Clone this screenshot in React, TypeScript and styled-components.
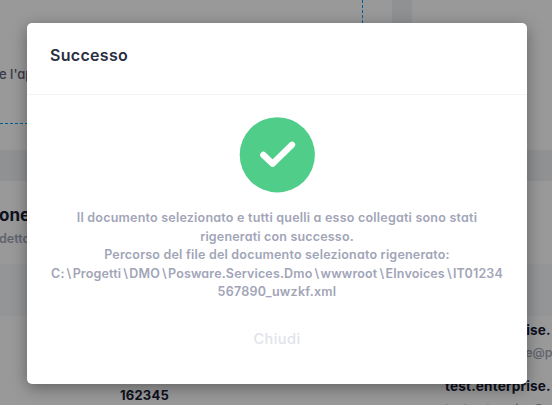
import React from "react";
import styled, { createGlobalStyle } from "styled-components";

const GlobalStyle = createGlobalStyle`
  *, *::before, *::after { box-sizing: border-box; }
  body {
    margin: 0;
    overflow: hidden;
    font-family: Inter, "Liberation Sans", sans-serif;
    font-feature-settings: "cv11" 1;
  }
`;

const Screen = styled.div`
  position: relative;
  width: 552px;
  height: 405px;
  overflow: hidden;
`;

const Page = styled.div`
  display: flex;
  flex-direction: column;
  gap: 31px;
  height: 100%;
  background: #eff2f5;
  white-space: nowrap;
`;

const TopCards = styled.div`
  display: grid;
  grid-template-columns: 392px 140px;
  column-gap: 20px;
  height: 150px;
  flex: none;
`;

const Card = styled.section`
  background: #fff;
  overflow: hidden;
`;

const Notice = styled.div`
  width: 363px;
  height: 124px;
  padding: 65px 0 0;
  border-right: 1px dashed #009ef7;
  border-bottom: 1px dashed #009ef7;
  color: #5e6278;
  font-size: 13px;
  font-weight: 500;
  line-height: 19px;
  text-indent: -1px;
`;

const OrdersCard = styled(Card)`
  flex: 1;
  display: flex;
  flex-direction: column;
`;

const OrdersHeading = styled.header`
  height: 83px;
  padding-top: 23px;
  flex: none;
`;

const OrdersTitle = styled.h2`
  margin: 0 0 0 -1px;
  color: #181c32;
  font-size: 17px;
  font-weight: 700;
  line-height: 22px;
`;

const OrdersSubtitle = styled.p`
  margin: 4px 0 0 -1px;
  color: #a1a5b7;
  font-size: 12.5px;
  font-weight: 600;
  line-height: 18px;
`;

const TableHead = styled.div`
  height: 52px;
  flex: none;
  background: #f7f8fa;
`;

const TableRow = styled.div`
  display: grid;
  grid-template-columns: 120px 325px 1fr;
  height: 56px;
  flex: none;
  padding-top: 5px;
`;

const CustomerCell = styled.div`
  grid-column: 3;
`;

const Strong = styled.div<{ $spacing?: number }>`
  color: #181c32;
  font-size: 13px;
  font-weight: 700;
  line-height: 18px;
  letter-spacing: ${({ $spacing = 0 }) => $spacing}px;
`;

const CustomerName = styled(Strong)`
  font-size: 13.6px;
`;

const OrderNumber = styled(Strong)`
  grid-column: 2;
  padding-top: 9px;
`;

const Email = styled.div`
  margin-top: 4px;
  color: #a1a5b7;
  font-size: 12.5px;
  font-weight: 500;
  line-height: 19px;
`;

const Overlay = styled.div`
  position: absolute;
  inset: 0;
  display: flex;
  align-items: flex-start;
  justify-content: center;
  padding: 23px 25px 0 27px;
  background: rgba(0, 0, 0, 0.4);
`;

const Dialog = styled.div`
  width: 500px;
  height: 361px;
  background: #fff;
  border-radius: 5px;
  box-shadow: 0 4px 16px rgba(0, 0, 0, 0.36);
`;

const DialogHeader = styled.header`
  height: 72px;
  padding: 22px 23px 0;
  border-bottom: 1px solid #f3f4f6;
`;

const DialogTitle = styled.h1`
  margin: 0;
  color: #2b2f42;
  font-size: 16px;
  font-weight: 600;
  line-height: 21px;
  letter-spacing: 0.3px;
`;

const DialogBody = styled.div`
  display: flex;
  flex-direction: column;
  align-items: center;
  padding-top: 22px;
`;

const SuccessIcon = styled.svg`
  display: block;
  width: 76px;
  height: 76px;
`;

const Message = styled.div`
  margin-top: 16px;
  color: #a1a5b7;
  font-size: 12.5px;
  font-weight: 600;
  line-height: 18.6px;
  text-align: center;
  white-space: nowrap;
`;

const Line = styled.div<{ $spacing: number }>`
  letter-spacing: ${({ $spacing }) => $spacing}px;
`;

const Separator = styled.span`
  padding: 0 1.2px 0 2px;
`;

const CloseButton = styled.button`
  margin-top: 26px;
  padding: 0;
  border: 0;
  background: none;
  color: #e1e3ea;
  font: 500 14.5px/22px Inter, "Liberation Sans", sans-serif;
  letter-spacing: 0.45px;
`;

const messageLines = [
  { text: "Il documento selezionato e tutti quelli a esso collegati sono stati", spacing: 0.22 },
  { text: "rigenerati con successo.", spacing: 0.18 },
  { text: "Percorso del file del documento selezionato rigenerato:", spacing: 0.2 },
  { text: "C:\\Progetti\\DMO\\Posware.Services.Dmo\\wwwroot\\EInvoices\\IT01234", spacing: 0.155 },
  { text: "567890_uwzkf.xml", spacing: 0.27 },
];

function PathText({ text }: { text: string }) {
  return (
    <>
      {text.split("\\").map((part, index) => (
        <React.Fragment key={part}>
          {index > 0 && <Separator>{"\\"}</Separator>}
          {part}
        </React.Fragment>
      ))}
    </>
  );
}

export default function App() {
  return (
    <Screen>
      <GlobalStyle />
      <Page>
        <TopCards>
          <Card>
            <Notice>e l'app</Notice>
          </Card>
          <Card />
        </TopCards>
        <OrdersCard>
          <OrdersHeading>
            <OrdersTitle>one</OrdersTitle>
            <OrdersSubtitle>detto</OrdersSubtitle>
          </OrdersHeading>
          <TableHead />
          <TableRow>
            <CustomerCell>
              <CustomerName $spacing={0.15}>test.enterprise.</CustomerName>
              <Email>test.enterprise@p</Email>
            </CustomerCell>
          </TableRow>
          <TableRow>
            <OrderNumber $spacing={0.2}>162345</OrderNumber>
            <CustomerCell>
              <CustomerName $spacing={0.15}>test.enterprise.</CustomerName>
              <Email>test.enterprise@p</Email>
            </CustomerCell>
          </TableRow>
        </OrdersCard>
      </Page>
      <Overlay>
        <Dialog role="dialog">
          <DialogHeader>
            <DialogTitle>Successo</DialogTitle>
          </DialogHeader>
          <DialogBody>
            <SuccessIcon viewBox="0 0 76 76">
              <circle cx="38.3" cy="37.8" r="37.6" fill="#50cd89" />
              <path
                d="M24.3 37.9 L33.6 46.8 L53 27.8"
                fill="none"
                stroke="#fff"
                strokeWidth="6.3"
                strokeLinecap="round"
                strokeLinejoin="round"
              />
            </SuccessIcon>
            <Message>
              {messageLines.map(({ text, spacing }) => (
                <Line key={text} $spacing={spacing}>
                  <PathText text={text} />
                </Line>
              ))}
            </Message>
            <CloseButton type="button">Chiudi</CloseButton>
          </DialogBody>
        </Dialog>
      </Overlay>
    </Screen>
  );
}
